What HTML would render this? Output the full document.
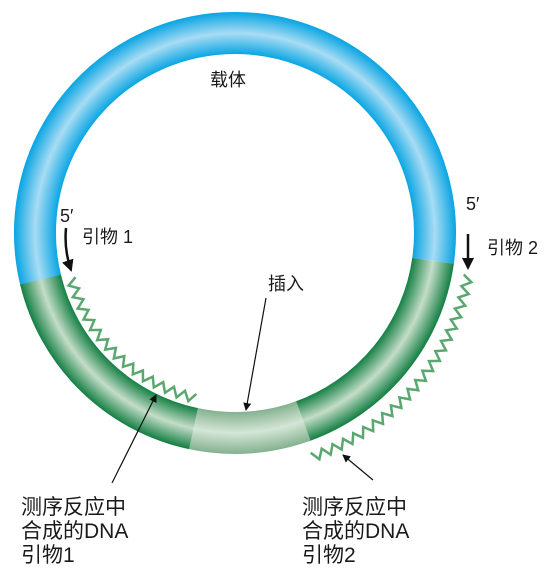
<!DOCTYPE html>
<html><head><meta charset="utf-8"><style>
html,body{margin:0;padding:0;background:#fff;width:555px;height:579px;overflow:hidden}
svg{display:block}
text{font-family:"Liberation Sans","Noto Sans CJK SC",sans-serif;fill:#1a1a1a}
</style></head><body>
<svg id="s" width="555" height="579" viewBox="0 0 555 579" xmlns="http://www.w3.org/2000/svg">
<defs>
<radialGradient id="gb" gradientUnits="userSpaceOnUse" cx="235" cy="233" r="222">
<stop offset="0.80" stop-color="#00a2e2"/><stop offset="0.90" stop-color="#a8dcf4"/><stop offset="1" stop-color="#00a2e2"/></radialGradient>
<radialGradient id="gg" gradientUnits="userSpaceOnUse" cx="235" cy="233" r="222">
<stop offset="0.80" stop-color="#0a7a3c"/><stop offset="0.90" stop-color="#c4ddc8"/><stop offset="1" stop-color="#0a7a3c"/></radialGradient>
<radialGradient id="gi" gradientUnits="userSpaceOnUse" cx="235" cy="233" r="222">
<stop offset="0.80" stop-color="#80ae8c"/><stop offset="0.90" stop-color="#d4e6d6"/><stop offset="1" stop-color="#80ae8c"/></radialGradient>
<marker id="ah" markerWidth="8" markerHeight="8" refX="7" refY="4" orient="auto" markerUnits="userSpaceOnUse"><path d="M0,0 L8,4 L0,8 Z" fill="#111"/></marker>
<marker id="ah2" markerWidth="12" markerHeight="12" refX="10" refY="6" orient="auto" markerUnits="userSpaceOnUse"><path d="M0,0 L12,6 L0,12 Z" fill="#111"/></marker>
</defs>
<g id="ring" fill="none" stroke-width="42"></g>
<g id="zz" fill="none" stroke="#5aa870" stroke-width="2.5"></g>
<text x="210" y="86" font-size="18">载体</text>
<text x="60" y="222" font-size="18">5′</text>
<text x="466" y="210" font-size="18">5′</text>
<text x="82" y="243" font-size="18">引物 1</text>
<text x="487" y="254" font-size="18">引物 2</text>
<text x="268" y="290" font-size="18">插入</text>
<path d="M66,228 Q64,250 71,270" stroke="#111" stroke-width="2.5" fill="none" marker-end="url(#ah2)"/>
<path d="M468,234 L468,268" stroke="#111" stroke-width="2.5" fill="none" marker-end="url(#ah2)"/>
<path d="M266,298 L246,410" stroke="#111" stroke-width="1.2" marker-end="url(#ah)"/>
<path d="M112,483 L156,395" stroke="#111" stroke-width="1.2" marker-end="url(#ah)"/>
<path d="M373,480 L343,455" stroke="#111" stroke-width="1.2" marker-end="url(#ah)"/>
<g font-size="21">
<text x="21" y="514">测序反应中</text><text x="21" y="538">合成的DNA</text><text x="21" y="562">引物1</text>
<text x="302" y="514">测序反应中</text><text x="302" y="538">合成的DNA</text><text x="302" y="562">引物2</text>
</g>
</svg>
<script>
var cx=235,cy=233,R=200,ns="http://www.w3.org/2000/svg";
function arc(a1,a2,col){var r=a=>a*Math.PI/180;var x1=cx+R*Math.cos(r(a1)),y1=cy+R*Math.sin(r(a1)),x2=cx+R*Math.cos(r(a2)),y2=cy+R*Math.sin(r(a2));
var large=((a2-a1+360)%360)>180?1:0;var p=document.createElementNS(ns,"path");p.setAttribute("d","M"+x1+","+y1+" A"+R+","+R+" 0 "+large+",1 "+x2+","+y2);p.setAttribute("stroke",col);document.getElementById("ring").appendChild(p);}
arc(166,368,"url(#gb)");arc(8,70.5,"url(#gg)");arc(70,102.5,"url(#gi)");arc(102,166.5,"url(#gg)");
function zz(r,a1,a2){var rad=Math.PI/180,L=Math.abs(a2-a1)*rad*r,n=Math.round(L/6),d="";
for(var i=0;i<=n;i++){var a=(a1+(a2-a1)*i/n)*rad,rr=r+(i%2?4.5:-4.5);d+=(i?"L":"M")+(cx+rr*Math.cos(a)).toFixed(1)+","+(cy+rr*Math.sin(a)).toFixed(1);}
var p=document.createElementNS(ns,"path");p.setAttribute("d",d);document.getElementById("zz").appendChild(p);}
zz(170,164.5,103.5);zz(237,10.3,71);
</script>
</body></html>
